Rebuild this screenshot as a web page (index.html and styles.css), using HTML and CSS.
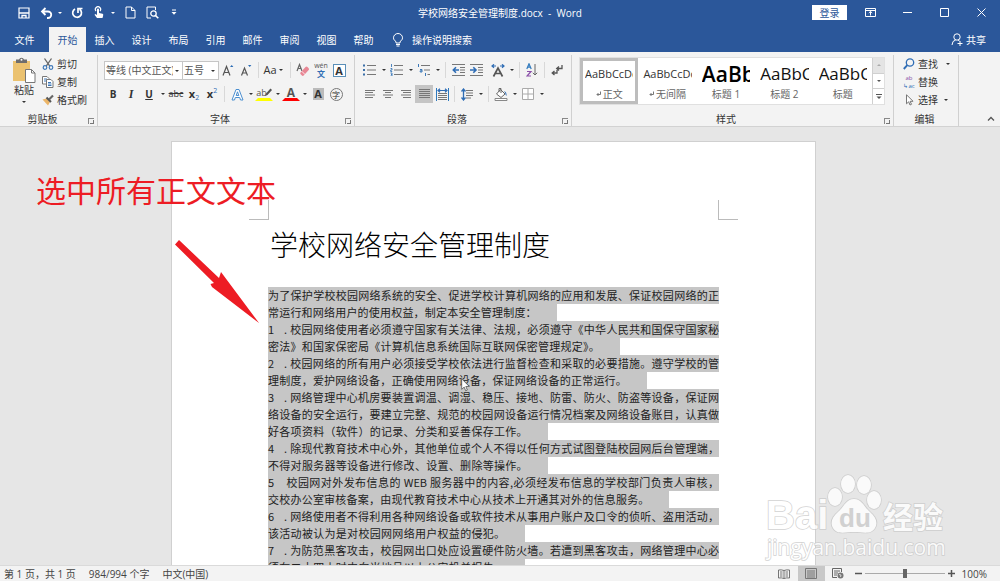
FILE: index.html
```html
<!DOCTYPE html>
<html lang="zh-CN">
<head>
  <meta charset="UTF-8" />
  <meta name="viewport" content="width=device-width, initial-scale=1.0"/>
  <title>学校网络安全管理制度.docx - Word</title>
  <link rel="stylesheet" href="styles.css">
</head>
<body>
  <!-- Title bar -->
  <header class="titlebar">
    <div class="quick">
      <button class="ico" aria-label="保存"><svg width="12" height="12" viewBox="0 0 12 12"><path d="M1 1h10v10H1z" fill="none" stroke="#fff" stroke-width="1.2"/><path d="M1 6h10M4 11V8.500h4V11" fill="none" stroke="#fff" stroke-width="1.300"/></svg></button>
      <span class="split">
        <button class="ico" aria-label="撤消"><svg width="13" height="12" viewBox="0 0 13 12"><path d="M2 4.500h6a3.200 3.200 0 0 1 0 6.500H7M5.500 1L2 4.500 5.500 8" fill="none" stroke="#fff" stroke-width="1.800"/></svg></button>
        <button class="caret" aria-label="撤消选项"></button>
      </span>
      <button class="ico" aria-label="重复"><svg width="12" height="12" viewBox="0 0 12 12"><path d="M4 2a4.400 4.400 0 1 0 4.500.2M7 6V1.500h4.500" fill="none" stroke="#fff" stroke-width="1.700"/></svg></button>
      <span class="split">
        <button class="ico" aria-label="触摸模式"><svg width="12" height="13" viewBox="0 0 12 13"><path d="M3 5a2.600 2.600 0 1 1 4 0" fill="none" stroke="#fff" stroke-width="1.200"/><path d="M4 3.500a1 1 0 0 1 2 0V7l3.500.8q1 .4.700 1.500L9.500 12H4L1.500 8.700l.9-.8L4 9z" fill="#fff"/></svg></button>
        <button class="caret" aria-label="触摸选项"></button>
      </span>
      <button class="ico" aria-label="新建"><svg width="11" height="13" viewBox="0 0 11 13"><path d="M1 1h5.500L10 4.500V12H1zM6.500 1v3.500H10" fill="none" stroke="#fff"/></svg></button>
      <button class="ico" aria-label="打印预览"><svg width="13" height="13" viewBox="0 0 13 13"><path d="M5 12H1V1h8.500v3" fill="none" stroke="#fff"/><circle cx="7.500" cy="7.500" r="2.700" fill="none" stroke="#fff" stroke-width="1.300"/><path d="M9.500 9.500l2.800 2.800" stroke="#fff" stroke-width="1.600"/></svg></button>
      <button class="ico" aria-label="自定义快速访问工具栏"><svg width="6" height="7" viewBox="0 0 6 7"><path d="M1 1h4" stroke="#fff"/><path d="M.5 3h5L3 5.800z" fill="#fff"/></svg></button>
    </div>
    <h1 class="doc-name">学校网络安全管理制度.docx&nbsp; -&nbsp; Word</h1>
    <div class="window-tools">
      <button class="login">登录</button>
      <button class="win" aria-label="功能区显示选项"><svg width="11" height="9" viewBox="0 0 11 9"><path d="M.5.500h10v8H.500zM.5 2.500h10M5.500 7.500v-4M3.800 5l1.700-1.600L7.200 5" fill="none" stroke="#fff"/></svg></button>
      <button class="win" aria-label="最小化"><svg width="9" height="9" viewBox="0 0 9 9"><path d="M0 4.500h9" stroke="#fff"/></svg></button>
      <button class="win" aria-label="最大化"><svg width="9" height="9" viewBox="0 0 9 9"><path d="M.5.500h8v8h-8z" fill="none" stroke="#fff"/></svg></button>
      <button class="win" aria-label="关闭"><svg width="9" height="9" viewBox="0 0 9 9"><path d="M.5.500l8 8M8.500.500l-8 8" stroke="#fff"/></svg></button>
    </div>
  </header>

  <!-- Tabs -->
  <nav class="tabs">
    <button class="tab file">文件</button>
    <button class="tab active">开始</button>
    <button class="tab">插入</button>
    <button class="tab">设计</button>
    <button class="tab">布局</button>
    <button class="tab">引用</button>
    <button class="tab">邮件</button>
    <button class="tab">审阅</button>
    <button class="tab">视图</button>
    <button class="tab">帮助</button>
    <button class="tell-me"><svg width="12" height="14" viewBox="0 0 12 14"><path d="M4 10V8.700C2.500 7.500 1.500 6.500 1.500 4.800a4.500 4.300 0 0 1 9 0C10.500 6.500 9.500 7.500 8 8.700V10zM4 11.500h4M4.500 13h3" fill="none" stroke="#fff"/></svg>操作说明搜索</button>
    <button class="share"><svg width="12" height="13" viewBox="0 0 12 13"><circle cx="6" cy="4" r="3.200" fill="none" stroke="#fff"/><path d="M1 12q.2-4.500 3.700-5M7 7l1.500 1M9 8v5M6.500 10.500h5" fill="none" stroke="#fff"/></svg>共享</button>
  </nav>

  <!-- Ribbon -->
  <div class="ribbon">
    <section class="group clipboard">
      <div class="group-body">
        <button class="paste">
          <svg width="24" height="26" viewBox="0 0 24 26"><path d="M1 4h17v20H1z" fill="#ebc270"/><path d="M4 2.500h3a2.700 2.700 0 0 1 5 0h3V6H4z" fill="#6d6d6d"/><circle cx="9.500" cy="2.800" r="1" fill="#fff"/><path d="M13.500 12.500h6l3.500 3.500v9.500h-9.500z" fill="#fff" stroke="#777"/><path d="M19.500 12.500V16H23" fill="none" stroke="#777"/></svg>
          <span>粘贴</span>
          <i class="caret"></i>
        </button>
        <div class="stack">
          <button class="cmd"><svg width="12" height="12" viewBox="0 0 12 12"><path d="M2.500.500l5.300 7.700M9.500.500L4.200 8.200" stroke="#666" stroke-width="1.300"/><circle cx="3" cy="9.500" r="1.800" fill="none" stroke="#3f78b8" stroke-width="1.200"/><circle cx="9" cy="9.500" r="1.800" fill="none" stroke="#3f78b8" stroke-width="1.200"/></svg>剪切</button>
          <button class="cmd"><svg width="12" height="12" viewBox="0 0 12 12"><path d="M.5.500H5L7 2.500V8H.500z" fill="#fff" stroke="#777"/><path d="M2 3h3M2 5h3" stroke="#3f78b8"/><path d="M4.500 3.500H9l2 2v6H4.500z" fill="#fff" stroke="#777"/><path d="M6 6.500h3M6 8h3.500M6 9.500h3.500" stroke="#3f78b8"/></svg>复制</button>
          <button class="cmd"><svg width="12" height="12" viewBox="0 0 12 12"><path d="M.5 5.500l4-1L8 8l-2 3.500z" fill="#ebb568"/><path d="M4.500 3.500L9 8" stroke="#555" stroke-width="2"/><path d="M7 5.500L11 1.500" stroke="#666" stroke-width="2.200"/></svg>格式刷</button>
        </div>
      </div>
      <h2 class="group-name">剪贴板</h2>
      <button class="launch" aria-label="剪贴板设置"></button>
    </section>

    <section class="group font">
      <div class="rows">
        <div class="row">
          <label class="pick family"><select aria-label="字体"><option>等线 (中文正文)</option></select></label>
          <label class="pick size"><select aria-label="字号"><option>五号</option></select></label>
          <button class="ico" aria-label="增大字号"><svg width="13" height="13" viewBox="0 0 13 13"><path d="M1 11.500L4.500 2.500 8 11.500M2.300 8.500h4.400" fill="none" stroke="#555" stroke-width="1.200"/><path d="M8 3l1.700-2 1.700 2z" fill="#2b6cb5"/></svg></button>
          <button class="ico" aria-label="减小字号"><svg width="13" height="13" viewBox="0 0 13 13"><path d="M1.500 11.500l3-7.500 3 7.500M2.500 9h4" fill="none" stroke="#555" stroke-width="1.200"/><path d="M8 1h3.400L9.700 3z" fill="#2b6cb5"/></svg></button>
          <span class="sep"></span>
          <button class="case">Aa<i class="caret"></i></button>
          <span class="sep"></span>
          <button class="ico" aria-label="清除格式"><svg width="14" height="14" viewBox="0 0 14 14"><path d="M1 8L3.500 1.500 6 8M2 5.500h3" fill="none" stroke="#666" stroke-width="1.200"/><path d="M4.500 9.500l5-5.500q1-1 2 0l1.200 1.200q.8.900 0 1.800l-5 5.500q-1 .8-1.800 0L4.500 11q-.6-.7 0-1.500z" fill="#e88795"/><path d="M5.700 8.200l3.500 3.500" stroke="#fff" stroke-width=".8"/></svg></button>
          <button class="pinyin ico" aria-label="拼音指南"><small>wén</small><b>文</b></button>
          <button class="ico" aria-label="字符边框"><span class="boxed">A</span></button>
        </div>
        <div class="row">
          <button class="ico"><b>B</b></button>
          <button class="ico italic"><b>I</b></button>
          <button class="ico"><u>U</u></button>
          <button class="caret" aria-label="下划线选项"></button>
          <button class="ico strike"><s>abc</s></button>
          <button class="ico script"><b>x</b><sub>2</sub></button>
          <button class="ico script"><b>x</b><sup>2</sup></button>
          <span class="sep"></span>
          <button class="ico" aria-label="文本效果"><svg width="13" height="13" viewBox="0 0 13 13"><path d="M1 12L5 1.500h3L12 12H9.500L8.700 9.500H4.300L3.500 12zM5.200 7.500h2.600L6.500 3.800z" fill="#fff" stroke="#4b8fd0"/></svg></button>
          <button class="caret" aria-label="文本效果选项"></button>
          <button class="ico mark yellow"><span>ab</span><svg width="8" height="9" viewBox="0 0 8 9"><path d="M1 8l1-2.500L6.500.500 8 2 3.500 7z" fill="#555"/></svg></button>
          <button class="caret" aria-label="突出显示选项"></button>
          <button class="ico mark red"><span>A</span></button>
          <button class="caret" aria-label="字体颜色选项"></button>
          <button class="ico"><span class="shaded">A</span></button>
          <button class="ico"><span class="ring">字</span></button>
        </div>
      </div>
      <h2 class="group-name">字体</h2>
      <button class="launch" aria-label="字体设置"></button>
    </section>

    <section class="group para">
      <div class="rows">
        <div class="row">
          <button class="ico" aria-label="项目符号"><svg width="14" height="12" viewBox="0 0 14 12"><path d="M0 1.500h2M0 6h2M0 10.500h2" stroke="#3b6fa8" stroke-width="2"/><path d="M4 1.500h9M4 6h9M4 10.500h9" stroke="#777"/></svg></button>
          <button class="caret" aria-label="项目符号选项"></button>
          <button class="ico" aria-label="编号"><svg width="14" height="12" viewBox="0 0 14 12"><path d="M1.500 0v3M.5 4.500h1.500v1.500H.700v1.500h1.500M.5 9h1.500v3H.500M1 10.500h1" fill="none" stroke="#3b78b8" stroke-width=".9"/><path d="M4 1.500h9M4 6h9M4 10.500h9" stroke="#777"/></svg></button>
          <button class="caret" aria-label="编号选项"></button>
          <button class="ico" aria-label="多级列表"><svg width="14" height="12" viewBox="0 0 14 12"><path d="M1.500 0v3M3 5.500h2v2.500H3.200V6.800H5M8.500 9v3" fill="none" stroke="#3b78b8"/><path d="M4 1.500h9M7 6h6M10.500 10.500H13" stroke="#777"/></svg></button>
          <button class="caret" aria-label="多级列表选项"></button>
          <span class="sep"></span>
          <button class="ico" aria-label="减少缩进量"><svg width="13" height="12" viewBox="0 0 13 12"><path d="M0 .5h13M8 3.500h5M8 6h5M8 8.500h5M0 11.500h13" stroke="#777"/><path d="M7 6H1.500M4 3.300L1.300 6 4 8.700" fill="none" stroke="#2f6db5" stroke-width="1.600"/></svg></button>
          <button class="ico" aria-label="增加缩进量"><svg width="13" height="12" viewBox="0 0 13 12"><path d="M0 .5h13M8 3.500h5M8 6h5M8 8.500h5M0 11.500h13" stroke="#777"/><path d="M0 6h5.500M3.300 3.300L6 6 3.300 8.700" fill="none" stroke="#2f6db5" stroke-width="1.600"/></svg></button>
          <button class="ico wide" aria-label="中文版式"><svg width="14" height="13" viewBox="0 0 14 13"><path d="M2.500 12.500L7 4l4.500 8.500M4.500 9.500h5" fill="none" stroke="#555" stroke-width="1.700"/><path d="M1 2h4M3 .3L1 2l2 1.700M13 2H9M11 .3L13 2l-2 1.700" fill="none" stroke="#2f6db5" stroke-width="1.200"/></svg></button>
          <button class="caret" aria-label="中文版式选项"></button>
          <span class="sep"></span>
          <button class="ico" aria-label="排序"><svg width="12" height="14" viewBox="0 0 12 14"><path d="M.8 6L3 .800 5.200 6M1.600 4.200h2.800" fill="none" stroke="#2f79bd" stroke-width="1.200"/><path d="M1 8.500h4L1 13h4" fill="none" stroke="#8a4fa8" stroke-width="1.200"/><path d="M9 1v11M6.800 9.800L9 12l2.200-2.200" fill="none" stroke="#666"/></svg></button>
          <span class="sep"></span>
          <button class="ico" aria-label="显示编辑标记"><svg width="12" height="12" viewBox="0 0 12 12"><path d="M11 1v3.500H6M8 2.500l-2.300 2L8 6.500M6 6v3H1.500M3.500 7L1.200 9l2.300 2" fill="none" stroke="#555" stroke-width="1.300"/></svg></button>
        </div>
        <div class="row">
          <button class="ico" aria-label="左对齐"><svg width="10" height="8" viewBox="0 0 10 8"><path d="M0 .5h10M0 2.500h8M0 5h10M0 7.500h8" stroke="#777"/></svg></button>
          <button class="ico" aria-label="居中"><svg width="10" height="8" viewBox="0 0 10 8"><path d="M0 .5h10M2 2.500h6M0 5h10M2 7.500h6" stroke="#777"/></svg></button>
          <button class="ico" aria-label="右对齐"><svg width="10" height="8" viewBox="0 0 10 8"><path d="M0 .5h10M2 2.500h8M0 5h10M2 7.500h8" stroke="#777"/></svg></button>
          <button class="ico pressed" aria-label="两端对齐"><svg width="11" height="10" viewBox="0 0 11 10"><path d="M0 .5h11M0 2.500h11M0 4.500h11M0 6.500h11M0 8.500h11" stroke="#777"/></svg></button>
          <button class="ico" aria-label="分散对齐"><svg width="13" height="13" viewBox="0 0 13 13"><path d="M.5 0v13M12.500 0v13" stroke="#2f79bd"/><path d="M2 5.500h9M2 7.500h9M2 9.500h9M2 11.500h9" stroke="#777"/><path d="M2 2.500h9M4 .7L2 2.500l2 1.800M9 .7l2 1.800-2 1.800" fill="none" stroke="#2f6db5" stroke-width="1.200"/></svg></button>
          <span class="sep"></span>
          <button class="ico" aria-label="行距"><svg width="13" height="13" viewBox="0 0 13 13"><path d="M5 2.500h7M5 5h7M5 7.500h7M5 10h5" stroke="#777"/><path d="M2.500 1v11M.5 3.500l2-2.500 2 2.500M.5 9.500l2 2.500 2-2.500" fill="none" stroke="#2f6db5" stroke-width="1.300"/></svg></button>
          <button class="caret" aria-label="行距选项"></button>
          <span class="sep"></span>
          <button class="ico" aria-label="底纹"><svg width="14" height="14" viewBox="0 0 14 14"><path d="M6.500 2.500l4.500 4.500-4 3.500L2.500 7z" fill="#fff" stroke="#666"/><path d="M5 5V1.500h2V6" fill="none" stroke="#666"/><path d="M10 4q3 1 2.500 5-1.200-1-1.300-3z" fill="#2f6db5"/><path d="M1 11.500h12v2H1z" fill="#fff" stroke="#888"/></svg></button>
          <button class="caret" aria-label="底纹选项"></button>
          <button class="ico" aria-label="边框"><svg width="12" height="12" viewBox="0 0 12 12"><path d="M.5.500h11v11H.500zM6 .5v11M.5 6h11" fill="#fff" stroke="#aaa"/></svg></button>
          <button class="caret" aria-label="边框选项"></button>
        </div>
      </div>
      <h2 class="group-name">段落</h2>
      <button class="launch" aria-label="段落设置"></button>
    </section>

    <section class="group styles">
      <div class="gallery">
        <button class="style selected"><span class="sample">AaBbCcDd</span><span class="style-name"><svg width="5" height="6" viewBox="0 0 5 6"><path d="M4.500.500v3H1M2.500 2L1 3.500 2.500 5" fill="none" stroke="#777"/></svg>正文</span></button>
        <button class="style"><span class="sample">AaBbCcDd</span><span class="style-name"><svg width="5" height="6" viewBox="0 0 5 6"><path d="M4.500.500v3H1M2.500 2L1 3.500 2.500 5" fill="none" stroke="#777"/></svg>无间隔</span></button>
        <button class="style"><span class="sample large">AaBb</span><span class="style-name">标题 1</span></button>
        <button class="style"><span class="sample medium">AaBbC</span><span class="style-name">标题 2</span></button>
        <button class="style"><span class="sample medium">AaBbC</span><span class="style-name">标题</span></button>
        <div class="scroller">
          <button class="off" aria-label="上一行"><svg width="6" height="4" viewBox="0 0 6 4"><path d="M1 3l2-2 2 2z" fill="#aaa"/></svg></button>
          <button aria-label="下一行"><svg width="6" height="4" viewBox="0 0 6 4"><path d="M1 1h4L3 3z" fill="#555"/></svg></button>
          <button aria-label="其他样式"><svg width="6" height="6" viewBox="0 0 6 6"><path d="M0 .5h6" stroke="#555"/><path d="M.5 2.500h5L3 5z" fill="#555"/></svg></button>
        </div>
      </div>
      <h2 class="group-name">样式</h2>
      <button class="launch" aria-label="样式设置"></button>
    </section>

    <section class="group editing">
      <div class="stack">
        <button class="cmd"><svg width="12" height="12" viewBox="0 0 12 12"><circle cx="7" cy="4.500" r="3.700" fill="none" stroke="#2f6db5" stroke-width="1.300"/><path d="M4.300 7.200L.8 11" stroke="#2f6db5" stroke-width="1.900"/></svg>查找<i class="caret far"></i></button>
        <button class="cmd"><span class="swap"><span>ab</span><span>↳ac</span></span>替换</button>
        <button class="cmd"><svg width="12" height="12" viewBox="0 0 12 12"><path d="M3.500.800v9l2.200-2 1.300 3.200 1.500-.7-1.400-3h3z" fill="#fff" stroke="#777"/></svg>选择<i class="caret"></i></button>
      </div>
      <h2 class="group-name">编辑</h2>
    </section>
    <button class="collapse" aria-label="折叠功能区"><svg width="8" height="6" viewBox="0 0 8 6"><path d="M1 4.500l3-3 3 3" fill="none" stroke="#555" stroke-width="1.300"/></svg></button>
  </div>

  <!-- Document -->
  <main class="workspace">
    <article class="page">
      <i class="corner left"></i>
      <i class="corner right"></i>
      <h2 class="heading">学校网络安全管理制度</h2>
      <div class="content">
        <p>为了保护学校校园网络系统的安全、促进学校计算机网络的应用和发展、保证校园网络的正</p>
        <p class="end w64">常运行和网络用户的使用权益，制定本安全管理制度：</p>
        <p><span class="num">1<i>.</i></span>校园网络使用者必须遵守国家有关法律、法规，必须遵守《中华人民共和国保守国家秘</p>
        <p class="end w78">密法》和国家保密局《计算机信息系统国际互联网保密管理规定》。</p>
        <p><span class="num">2<i>.</i></span>校园网络的所有用户必须接受学校依法进行监督检查和采取的必要措施。遵守学校的管</p>
        <p class="end w84">理制度，爱护网络设备，正确使用网络设备，保证网络设备的正常运行。</p>
        <p><span class="num">3<i>.</i></span>网络管理中心机房要装置调温、调湿、稳压、接地、防雷、防火、防盗等设备，保证网</p>
        <p>络设备的安全运行，要建立完整、规范的校园网设备运行情况档案及网络设备账目，认真做</p>
        <p class="end w62">好各项资料（软件）的记录、分类和妥善保存工作。</p>
        <p><span class="num">4<i>.</i></span>除现代教育技术中心外，其他单位或个人不得以任何方式试图登陆校园网后台管理端，</p>
        <p class="end w62">不得对服务器等设备进行修改、设置、删除等操作。</p>
        <p><span class="num short">5</span>校园网对外发布信息的 WEB 服务器中的内容,必须经发布信息的学校部门负责人审核，</p>
        <p class="end w89">交校办公室审核备案，由现代教育技术中心从技术上开通其对外的信息服务。</p>
        <p><span class="num">6<i>.</i></span>网络使用者不得利用各种网络设备或软件技术从事用户账户及口令的侦听、盗用活动，</p>
        <p class="end w57">该活动被认为是对校园网网络用户权益的侵犯。</p>
        <p><span class="num">7<i>.</i></span>为防范黑客攻击，校园网出口处应设置硬件防火墙。若遭到黑客攻击，网络管理中心必</p>
        <p class="end w57">须在二十四小时内向当地县以上公安机关报告。</p>
      </div>
      <svg class="pointer" width="9" height="14" viewBox="0 0 9 14"><path d="M.7.800v10.500l2.500-2.200 1.500 3.700 1.700-.8-1.600-3.500h3.500z" fill="#fff" stroke="#555" stroke-width=".8"/></svg>

      <!-- Red note beside the page -->
      <div class="note">选中所有正文文本</div>
      <svg class="arrow" width="90" height="88" viewBox="0 0 90 88"><path d="M6 1L2 5.500 41 44 37.500 45 39 48 86 84 48 33 46 39z" fill="#ed1c24"/></svg>
    </article>

    <svg class="watermark" width="190" height="92" viewBox="0 0 190 92">
      <g fill="#fff" stroke="#c8c8c8" stroke-width="1.500" paint-order="stroke">
        <text class="wm-logo" x="6" y="58">Bai</text>
        <ellipse cx="75" cy="26" rx="7" ry="9"/>
        <ellipse cx="88" cy="13" rx="7" ry="9"/>
        <ellipse cx="104" cy="14" rx="7" ry="9"/>
        <ellipse cx="114" cy="29" rx="7" ry="9"/>
        <path d="M94 28c-8 0-10 8-16 13-6 5-8 11-5 16 4 7 12 4 21 4s17 3 21-4c3-5 1-11-5-16-6-5-8-13-16-13z"/>
        <text class="wm-cn" x="123" y="57">经验</text>
        <text class="wm-url" x="7" y="84">jingyan.baidu.com</text>
      </g>
      <text class="wm-du" x="79" y="56">du</text>
    </svg>
  </main>

  <!-- Status bar -->
  <footer class="status">
    <span>第 1 页，共 1 页</span>
    <span>984/994 个字</span>
    <span>中文(中国)</span>
    <div class="view">
      <button class="mode" aria-label="阅读视图"><svg width="12" height="10" viewBox="0 0 12 10"><path d="M6 1.500Q3.500.500.500 1v8q3-.5 5.500.5 2.500-1 5.500-.5V1Q8.500.500 6 1.500v8M2 3h2.500M2 5h2.500M2 7h2.500M7.500 3H10M7.500 5H10M7.500 7H10" fill="none" stroke="#666" stroke-width=".9"/></svg></button>
      <button class="mode on" aria-label="页面视图"><svg width="12" height="11" viewBox="0 0 12 11"><path d="M.5.500h11v10H.500zM2 3h8M2 5h8M2 7h8M2 9h8" fill="none" stroke="#777"/></svg></button>
      <button class="mode" aria-label="Web 版式"><svg width="12" height="11" viewBox="0 0 12 11"><path d="M5 9.500H.500v-9h9V4M2 3h6M2 5h4M2 7h3" fill="none" stroke="#666"/><circle cx="8.500" cy="7.500" r="3" fill="#777"/><path d="M7 6.500l2 .5-.5 2" fill="none" stroke="#eee" stroke-width=".8"/></svg></button>
      <button class="step" aria-label="缩小"><svg width="7" height="7" viewBox="0 0 7 7"><path d="M0 3.500h7" stroke="#555" stroke-width="1.500"/></svg></button>
      <input class="zoom" type="range" min="0" max="200" value="100" aria-label="缩放">
      <button class="step" aria-label="放大"><svg width="7" height="7" viewBox="0 0 7 7"><path d="M0 3.500h7M3.500 0v7" stroke="#555" stroke-width="1.500"/></svg></button>
      <span>100%</span>
    </div>
  </footer>
</body>
</html>
```
FILE: styles.css
```css
* {
  margin: 0;
  padding: 0;
  box-sizing: border-box;
}

body {
  height: 100vh;
  display: flex;
  flex-direction: column;
  overflow: hidden;
  font-family: "Open Sans", "Noto Sans CJK SC", sans-serif;
  font-size: 10px;
  line-height: 14px;
  color: #333;
  background: #e6e6e6;
}

button {
  display: flex;
  align-items: center;
  justify-content: center;
  font: inherit;
  color: inherit;
  background: none;
  border: none;
}

svg {
  display: block;
  flex: none;
}

.ico {
  width: 18px;
  height: 18px;
  flex: none;
}

.caret {
  width: 9px;
  height: 10px;
  flex: none;
  display: flex;
  align-items: center;
  justify-content: center;
}

.caret::after,
.pick::after {
  content: '';
  border: 2px solid transparent;
  border-top-color: currentColor;
  border-bottom: none;
}

/* title bar */
.titlebar {
  display: grid;
  grid-template-columns: 1fr auto 1fr;
  align-items: center;
  height: 27px;
  flex: none;
  padding-bottom: 2px;
  background: #2b579a;
  color: #fff;
}

.quick {
  display: flex;
  align-items: center;
  gap: 4px;
  padding-left: 15px;
}

.split {
  display: flex;
  align-items: center;
}

.doc-name {
  font-size: 10px;
  font-weight: normal;
}

.window-tools {
  display: flex;
  align-items: center;
  justify-content: flex-end;
}

.login {
  width: 35px;
  height: 15px;
  margin-right: 5px;
  background: #fff;
  color: #2b579a;
}

.win {
  width: 37px;
  height: 24px;
}

/* tabs */
.tabs {
  display: flex;
  height: 25px;
  flex: none;
  background: #2b579a;
  color: #fff;
}

.tab {
  width: 37px;
}

.tab.file {
  width: 49px;
}

.tab.active {
  background: #f3f3f3;
  color: #2b579a;
}

.tell-me {
  gap: 8px;
  margin-left: 10px;
}

.share {
  gap: 3px;
  margin-left: auto;
  padding-right: 14px;
}

/* ribbon */
.ribbon {
  display: flex;
  height: 75px;
  flex: none;
  background: #f3f3f3;
  border-bottom: 1px solid #d2d2d2;
}

.group {
  position: relative;
  flex: none;
  display: flex;
  flex-direction: column;
  justify-content: space-between;
  margin: 3px 0 0;
  border-right: 1px solid #d0d0d0;
}

.group-name {
  font-size: 10px;
  font-weight: normal;
  text-align: center;
  padding-right: 12px;
}

.launch {
  position: absolute;
  right: 3px;
  bottom: 2px;
  width: 6px;
  height: 6px;
  border-top: 1px solid #888;
  border-left: 1px solid #888;
}

.launch::after {
  content: '';
  width: 3px;
  height: 3px;
  border-right: 1px solid #777;
  border-bottom: 1px solid #777;
}

.clipboard {
  width: 98px;
}

.group-body {
  display: flex;
  padding-left: 12px;
}

.paste {
  flex-direction: column;
  justify-content: flex-start;
  width: 24px;
  padding-top: 2px;
}

.stack {
  display: flex;
  flex-direction: column;
}

.cmd {
  height: 18px;
  gap: 3px;
  justify-content: flex-start;
}

.clipboard .stack {
  margin-left: 6px;
}

.rows {
  display: flex;
  flex-direction: column;
  gap: 6px;
  padding: 6px 0 0 6px;
}

.row {
  display: flex;
  align-items: center;
  height: 18px;
}

.sep {
  width: 1px;
  height: 16px;
  margin: 0 3px;
  background: #d8d8d8;
}

/* font group */
.font {
  width: 257px;
}

.pick {
  position: relative;
  height: 19px;
  border: 1px solid #c6c6c6;
  background: #fff;
}

.pick::after {
  position: absolute;
  right: 3px;
  top: 8px;
}

.pick select {
  width: 100%;
  height: 17px;
  padding-left: 1px;
  font: inherit;
  color: #555;
  border: none;
  background: none;
  appearance: none;
}

.family {
  width: 79px;
}

.family select {
  width: 68px;
}

.size {
  width: 36px;
  border-left: none;
}

.case {
  width: 25px;
  font-size: 11px;
}

.pinyin {
  flex-direction: column;
  color: #2f6db5;
}

.pinyin small {
  font-size: 7px;
  line-height: 6px;
  color: #555;
}

.pinyin b {
  font-size: 8px;
  line-height: 9px;
}

.boxed {
  width: 13px;
  height: 13px;
  font-size: 11px;
  font-weight: bold;
  line-height: 11px;
  border: 1px solid #5a8fb8;
  background: #fff;
}

.italic {
  font-family: "Liberation Serif", serif;
  font-size: 12px;
  font-style: italic;
}

.font u {
  font-weight: bold;
}

.strike {
  font-size: 9px;
}

.script {
  font-size: 11px;
}

.script sub,
.script sup {
  font-size: 7px;
  line-height: 7px;
  color: #2f6db5;
}

.script sub {
  align-self: flex-end;
  padding-bottom: 2px;
}

.script sup {
  align-self: flex-start;
  padding-top: 2px;
}

.mark {
  height: 14px;
  border-bottom: 3px solid;
  border-left: 3px solid transparent;
  border-right: 3px solid transparent;
  line-height: 10px;
}

.mark.yellow {
  border-bottom-color: #ff0;
  font-size: 9px;
}

.mark.yellow svg {
  margin-left: -3px;
}

.mark.red {
  border-bottom-color: #f00;
  font-size: 12px;
  font-weight: bold;
}

.mark span {
  color: #555;
}

.shaded {
  width: 11px;
  height: 12px;
  font-size: 11px;
  font-weight: bold;
  line-height: 12px;
  background: #bbb;
}

.ring {
  width: 13px;
  height: 13px;
  font-size: 8px;
  line-height: 11px;
  border: 1px solid #777;
  border-radius: 50%;
}

/* paragraph group */
.para {
  width: 217px;
}

.wide {
  margin-left: 4px;
}

.pressed {
  background: #c5c5c5;
}

/* styles group */
.styles {
  flex: 1;
  min-width: 0;
  padding-left: 7px;
  padding-right: 8px;
}

.gallery {
  display: flex;
  height: 48px;
  margin-top: 2px;
  background: #fff;
  border: 1px solid #e0e0e0;
}

.style {
  flex: 1;
  min-width: 0;
  flex-direction: column;
  padding: 0 5px;
}

.style.selected {
  padding: 0 2px;
  border: 3px solid #bdbdbd;
}

.sample {
  width: 100%;
  height: 26px;
  overflow: hidden;
  font-size: 11px;
  line-height: 26px;
  text-align: left;
  white-space: nowrap;
}

.sample.medium {
  font-size: 17px;
  color: #111;
}

.sample.large {
  font-size: 21px;
  font-weight: 600;
  color: #000;
}

.style-name {
  display: flex;
  align-items: center;
  gap: 2px;
  color: #666;
}

.scroller {
  width: 12px;
  display: flex;
  flex-direction: column;
  border-left: 1px solid #d0d0d0;
}

.scroller button {
  flex: 1;
}

.scroller button + button {
  border-top: 1px solid #d0d0d0;
}

.scroller .off {
  background: #e4e4e4;
}

/* editing group */
.editing {
  width: 65px;
  padding-left: 9px;
}

.editing .far {
  margin-left: 2px;
}

.swap {
  display: flex;
  flex-direction: column;
  width: 12px;
  font-size: 6px;
  line-height: 8px;
  color: #2f6db5;
}

.swap span:first-child {
  color: #8a4fa8;
}

.collapse {
  width: 41px;
  align-self: flex-end;
  height: 14px;
  padding-left: 22px;
}

/* document */
.workspace {
  position: relative;
  flex: 1;
  min-height: 0;
  overflow: hidden;
  padding: 14px 13px 0 0;
}

.page {
  position: relative;
  width: 645px;
  max-width: 100%;
  min-height: 100%;
  margin: 0 auto;
  padding: 83px 96px 0;
  background: #fff;
  border: 1px solid #d0d0d0;
}

.corner {
  position: absolute;
  top: 58px;
  width: 20px;
  height: 20px;
  border-bottom: 1px solid #bbb;
}

.corner.left {
  left: 77px;
  border-right: 1px solid #bbb;
}

.corner.right {
  right: 77px;
  border-left: 1px solid #bbb;
}

.heading {
  margin-bottom: 22px;
  padding-left: 2px;
  font-size: 28px;
  font-weight: 300;
  line-height: 40px;
  color: #000;
}

.content {
  font-family: "Noto Sans CJK SC", sans-serif;
  font-size: 11px;
  line-height: 17px;
  color: #222;
}

.content p {
  height: 17px;
  background: #c6c6c6;
  white-space: nowrap;
  text-align: justify;
  text-align-last: justify;
}

.content .end {
  padding-right: 20px;
}

.content .w57 { width: 57%; }
.content .w62 { width: 62%; }
.content .w64 { width: 64%; }
.content .w78 { width: 78%; }
.content .w84 { width: 84%; }
.content .w89 { width: 89%; }

.num {
  display: inline-flex;
  justify-content: space-between;
  width: 22px;
  padding-right: 3px;
}

.num.short {
  width: 18px;
}

.num i {
  font-style: normal;
}

.pointer {
  position: absolute;
  left: 289px;
  top: 236px;
}

.note {
  position: absolute;
  left: -136px;
  top: 29px;
  font-size: 30px;
  line-height: 40px;
  white-space: nowrap;
  color: #ed1c24;
}

.arrow {
  position: absolute;
  left: 1px;
  top: 97px;
}

.watermark {
  position: absolute;
  right: 50px;
  bottom: 2px;
  opacity: 0.8;
}

.wm-logo {
  font: bold 40px "Liberation Sans", sans-serif;
}

.wm-cn {
  font: bold 30px "Noto Sans CJK SC", sans-serif;
}

.wm-url {
  font: 21px "Open Sans", sans-serif;
}

.wm-du {
  font: bold 26px "Liberation Sans", sans-serif;
  fill: #ccc;
}

/* status bar */
.status {
  display: flex;
  align-items: center;
  gap: 13px;
  height: 16px;
  flex: none;
  padding-left: 4px;
  background: #f3f3f3;
  border-top: 1px solid #dadada;
  color: #444;
}

.view {
  display: flex;
  align-items: center;
  align-self: stretch;
  margin-left: auto;
  padding-right: 13px;
}

.mode {
  width: 27px;
  height: 15px;
}

.mode.on {
  background: #c8c8c8;
}

.step {
  width: 13px;
  height: 15px;
}

.zoom {
  width: 80px;
  height: 15px;
  appearance: none;
  background: linear-gradient(#aaa, #aaa) center / 100% 1px no-repeat;
}

.zoom::-webkit-slider-thumb {
  appearance: none;
  width: 4px;
  height: 9px;
  background: #666;
}

.view span {
  margin-left: 4px;
}
```
